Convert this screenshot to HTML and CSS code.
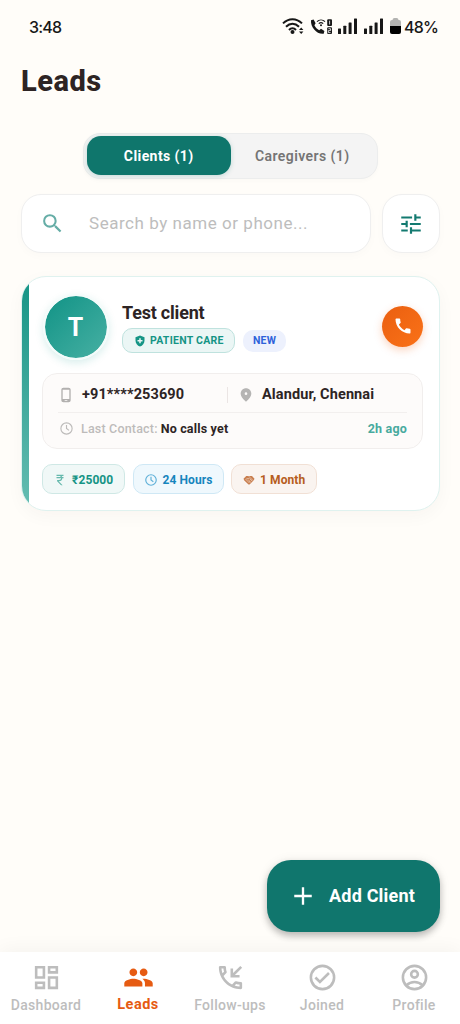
FILE: index.html
```html
<!DOCTYPE html>
<html lang="en">
<head>
<meta charset="utf-8">
<meta name="viewport" content="width=device-width, initial-scale=1">
<title>Leads</title>
<link rel="stylesheet" href="styles.css">
</head>
<body>
<div class="screen">
  <header class="status">
    <span class="time">3:48</span>
    <div class="indicators">
      <svg class="wifi" width="23" height="17" viewBox="0 0 23 17" fill="none" stroke="#171717" stroke-width="2"><path d="M1 5.400C6.500-.2 14.500-.2 20 5.400M4 8.800c4-4 9-4 13 0M7 12c2.200-2.300 4.800-2.300 7 0"/><circle cx="10.500" cy="14" r="2" fill="#171717" stroke="none"/><path d="M17 12l2.200-2.600L21.400 12zM17 13.500l2.200 2.600 2.200-2.600z" fill="#171717" stroke="none"/></svg>
      <svg class="wificall" width="23" height="17" viewBox="0 0 23 17"><path d="M1 2.200 3.600 1.500 5.600 5.200 4.400 7.200c1 2 2.800 4 4.800 5l1.800-1.400 3.400 2.100-.7 2.800C7 16.600.4 9.500 1 2.200z" fill="#171717"/><path d="M7 3.700c2.300-2.300 5.700-2.300 8 0M8.800 5.700c1.300-1.300 3.100-1.300 4.400 0" fill="none" stroke="#171717" stroke-width="1.200"/><circle cx="11" cy="7.300" r="1" fill="#171717"/><rect x="17.200" y="1.200" width="4.800" height="6.800" rx="1" fill="#171717"/><rect x="17.200" y="9.200" width="4.800" height="6.800" rx="1" fill="#171717"/><path d="M19.600 2.700v3.800M18.400 10.700h2.200v1.900h-2.200v2h2.200" fill="none" stroke="#fff" stroke-width=".8"/></svg>
      <svg class="signal" width="20" height="17" viewBox="0 0 20 17" fill="#171717"><rect x="0" y="10.500" width="3" height="5.500" rx=".5"/><rect x="5.300" y="7.800" width="3" height="8.200" rx=".5"/><rect x="10.600" y="4.500" width="3" height="11.500" rx=".5"/><rect x="16" y=".5" width="3" height="15.500" rx=".5"/></svg>
      <svg class="signal second" width="20" height="17" viewBox="0 0 20 17" fill="#171717"><rect x="0" y="10.500" width="3" height="5.500" rx=".5"/><rect x="5.300" y="7.800" width="3" height="8.200" rx=".5"/><rect x="10.600" y="4.500" width="3" height="11.500" rx=".5"/><rect x="16" y=".5" width="3" height="15.500" rx=".5"/></svg>
      <svg class="battery" width="11" height="17" viewBox="0 0 11 17"><path d="M0 8V4q0-2 2-2h.5q0-2 2-2h2q2 0 2 2H9q2 0 2 2v4z" fill="#b3b3b1"/><path d="M0 8h11v6q0 2-2 2H2q-2 0-2-2z" fill="#000"/></svg>
      <span class="percent">48%</span>
    </div>
  </header>

  <h1 class="title">Leads</h1>

  <div class="tabs">
    <button class="tab active"><span>Clients (1)</span></button>
    <button class="tab"><span>Caregivers (1)</span></button>
  </div>

  <div class="search-row">
    <div class="search">
      <svg width="25" height="25" viewBox="0 0 24 24" fill="#65ada6"><path d="M15.500 14h-.79l-.28-.27A6.470 6.470 0 0 0 16 9.500 6.500 6.500 0 1 0 9.500 16c1.610 0 3.090-.59 4.230-1.570l.27.28v.79l5 4.990L20.490 19l-4.990-5zm-6 0C7.010 14 5 11.990 5 9.500S7.010 5 9.500 5 14 7.010 14 9.500 11.990 14 9.500 14z"/></svg>
      <span class="placeholder">Search by name or phone...</span>
    </div>
    <button class="filter"><svg width="26" height="26" viewBox="0 0 24 24" fill="#137a70"><path d="M3 17v2h6v-2H3zM3 5v2h10V5H3zm10 16v-2h8v-2h-8v-2h-2v6h2zM7 9v2H3v2h4v2h2V9H7zm14 4v-2H11v2h10zm-6-4h2V7h4V5h-4V3h-2v6z"/></svg></button>
  </div>

  <article class="card">
    <div class="stripe"></div>
    <div class="body">
      <div class="head">
        <div class="avatar">T</div>
        <div class="identity">
          <h2 class="name">Test client</h2>
          <div class="tags">
            <span class="tag care"><svg width="12" height="12" viewBox="0 0 24 24" fill="#159485"><path fill-rule="evenodd" d="M12 1 3 4.500v6.500c0 5.550 3.840 10.740 9 12 5.160-1.260 9-6.450 9-12V4.500zM10.500 6.500h3v3.500H17v3h-3.500v3.500h-3V13H7v-3h3.500z"/></svg><b>PATIENT CARE</b></span>
            <span class="tag new"><b>NEW</b></span>
          </div>
        </div>
        <button class="call"><svg width="20" height="20" viewBox="0 0 24 24" fill="#fff"><path d="M20.010 15.380c-1.230 0-2.420-.2-3.530-.56a.977.977 0 0 0-1.010.24l-1.570 1.970c-2.830-1.350-5.480-3.900-6.890-6.830l1.950-1.660c.27-.28.35-.67.24-1.020-.37-1.110-.56-2.300-.56-3.530 0-.54-.45-.99-.99-.99H4.190C3.650 3 3 3.240 3 3.990 3 13.280 10.730 21 20.010 21c.71 0 .99-.63.99-1.180v-3.450c0-.54-.45-.99-.99-.99z"/></svg></button>
      </div>

      <div class="info">
        <div class="contact">
          <div class="phone"><svg width="16" height="16" viewBox="0 0 24 24" fill="#b2b0af"><path d="M16 1H8C6.340 1 5 2.340 5 4v16c0 1.660 1.340 3 3 3h8c1.660 0 3-1.340 3-3V4c0-1.660-1.340-3-3-3zm1 17H7V4h10v14zm-3 3h-4v-1h4v1z"/></svg><b>+91****253690</b></div>
          <div class="place"><svg width="16" height="16" viewBox="0 0 24 24" fill="#b5b4b3"><path d="M12 2C7.800 2 4 5.220 4 10.200c0 3.320 2.670 7.250 8 11.800 5.330-4.550 8-8.480 8-11.800C20 5.220 16.200 2 12 2zm0 10a2 2 0 1 1 0-4 2 2 0 0 1 0 4z"/></svg><b>Alandur, Chennai</b></div>
        </div>
        <div class="last">
          <svg width="15" height="15" viewBox="0 0 24 24" fill="none" stroke="#bdbbba" stroke-width="1.800"><circle cx="12" cy="12" r="9"/><path d="M12 6.500V12l4 3"/></svg>
          <span class="label">Last Contact:</span><b class="value">No calls yet</b><b class="ago">2h ago</b>
        </div>
      </div>

      <div class="chips">
        <span class="chip pay"><svg width="14" height="14" viewBox="0 0 24 24" fill="#66b9ad"><path d="M13.660 7c-.56-1.180-1.760-2-3.160-2H6V3h12v2h-3.260c.48.580.84 1.260 1.050 2H18v2h-2.020A5.500 5.500 0 0 1 10.500 14h-.73l6.730 7h-2.770L7 14v-2h3.500c1.760 0 3.220-1.300 3.460-3H6V7z"/></svg><b>₹25000</b></span>
        <span class="chip hours"><svg width="14" height="14" viewBox="0 0 24 24" fill="none" stroke="#5fb0d8" stroke-width="2"><circle cx="12" cy="12" r="9"/><path d="M12 6.500V12l4 3"/></svg><b>24 Hours</b></span>
        <span class="chip month"><svg width="12" height="12" viewBox="0 0 24 24"><path d="M1 9.500 6.500 4h4L12 5l2-1h4l5 5.500-1.500 3L13 21h-2L2.500 13z" fill="#c97f50"/><path d="m5 12 4-4 2 2 3-3 6 6M7 14l3-3M9 16l3-3M11 18l3-3M14 10l4 4M12 13l3 4" fill="none" stroke="#fbf2ec" stroke-width="1"/></svg><b>1 Month</b></span>
      </div>
    </div>
  </article>
</div>

<button class="fab"><svg width="28" height="28" viewBox="0 0 24 24" fill="none" stroke="#fff" stroke-width="2"><path d="M12 4.500v15M4.500 12h15"/></svg><span>Add Client</span></button>

<nav class="nav">
  <a class="item"><svg width="31" height="31" viewBox="0 0 24 24" fill="#bdbdbd"><path d="M19 5v2h-4V5h4M9 5v6H5V5h4m10 8v6h-4v-6h4M9 17v2H5v-2h4M21 3h-8v6h8V3zM11 3H3v10h8V3zm10 8h-8v10h8V11zm-10 4H3v6h8v-6z"/></svg><span>Dashboard</span></a>
  <a class="item current"><svg width="31" height="31" viewBox="0 0 24 24" fill="#e65b12"><path d="M16 11c1.660 0 2.990-1.340 2.990-3S17.660 5 16 5s-3 1.340-3 3 1.340 3 3 3zm-8 0c1.660 0 2.990-1.340 2.990-3S9.660 5 8 5 5 6.340 5 8s1.340 3 3 3zm0 2c-2.330 0-7 1.170-7 3.500V19h14v-2.500c0-2.330-4.670-3.500-7-3.500zm8 0c-.29 0-.62.02-.97.05 1.160.84 1.970 1.970 1.970 3.450V19h6v-2.500c0-2.330-4.670-3.500-7-3.500z"/></svg><span>Leads</span></a>
  <a class="item"><svg width="31" height="31" viewBox="0 0 24 24" fill="#bdbdbd"><path d="M20 15.500c-1.250 0-2.450-.2-3.570-.57a1.020 1.020 0 0 0-1.020.24l-2.200 2.200a15.045 15.045 0 0 1-6.590-6.590l2.200-2.200c.28-.28.36-.67.25-1.020A11.360 11.360 0 0 1 8.500 4c0-.55-.45-1-1-1H4c-.55 0-1 .45-1 1 0 9.390 7.610 17 17 17 .55 0 1-.45 1-1v-3.500c0-.55-.45-1-1-1zM5.030 5h1.500c.07.880.22 1.750.46 2.590L5.790 8.800c-.41-1.210-.67-2.480-.76-3.800zM19 18.970c-1.320-.09-2.600-.35-3.800-.76l1.200-1.200c.85.240 1.710.390 2.600.450v1.510zM21 4.410 19.590 3 14 8.590V5h-2v7h7v-2h-3.590z"/></svg><span>Follow-ups</span></a>
  <a class="item"><svg width="31" height="31" viewBox="0 0 24 24" fill="none" stroke="#bdbdbd" stroke-width="2"><circle cx="12" cy="12" r="9"/><path d="m6.500 12 3.500 3.500 7-7"/></svg><span>Joined</span></a>
  <a class="item"><svg width="31" height="31" viewBox="0 0 24 24" fill="none" stroke="#bdbdbd" stroke-width="2"><circle cx="12" cy="12" r="9"/><circle cx="12" cy="9.500" r="2.600"/><path d="M5.800 18c3.400-3.300 9-3.300 12.400 0"/></svg><span>Profile</span></a>
</nav>
</body>
</html>
```

FILE: styles.css
```css
* { box-sizing: border-box; }
html, body { margin: 0; height: 100%; }
body {
  display: flex;
  flex-direction: column;
  width: 460px;
  height: 1024px;
  overflow: hidden;
  position: relative;
  background: #fffdf9;
  color: #2d2424;
  font-family: Roboto, "Noto Sans", sans-serif;
}
button { border: 0; padding: 0; font: inherit; }
svg { display: block; flex: none; }
b { font-weight: 700; }

.screen { flex: 1; padding: 0 20px 0 21px; }

.status {
  display: flex;
  justify-content: space-between;
  align-items: center;
  height: 53px;
  padding: 0 2px 0 8px;
  color: #171717;
}
.time { font: 500 16px/20px Inter, sans-serif; letter-spacing: -.8px; }
.indicators { display: flex; align-items: center; }
.wifi { margin-right: 5px; }
.wificall { margin-right: 5px; }
.signal { margin-right: 6px; }
.battery { margin-right: 3px; }
.percent { font: 500 16px/20px Inter, sans-serif; letter-spacing: -.8px; }

.title { margin: 9px 0 0; font-size: 29px; line-height: 38px; font-weight: 800; letter-spacing: .5px; }

.tabs {
  display: flex;
  width: 295px;
  height: 46px;
  margin: 33px 0 0 62px;
  padding: 2px 3px;
  border: 1px solid #eceded;
  border-radius: 17px;
  background: #f4f4f4;
  box-shadow: 0 2px 5px rgba(0, 0, 0, .02);
}
.tab {
  flex: 1;
  height: 39px;
  border-radius: 14px;
  background: none;
  color: #757575;
  font-size: 14px;
  font-weight: 600;
  letter-spacing: .42px;
}
.tab.active { background: #0f766c; color: #fff; font-weight: 700; box-shadow: 0 1px 5px rgba(15, 118, 110, .22); }

.search-row { display: flex; gap: 11px; margin-top: 15px; }
.search, .filter {
  height: 59px;
  border: 1.500px solid #efefef;
  border-radius: 20px;
  background: #fff;
  box-shadow: 0 3px 10px rgba(0, 0, 0, .018);
}
.search { flex: 1; display: flex; align-items: center; padding: 0 0 0 18px; }
.placeholder { margin: -2px 0 0 24px; color: #bdbdbd; font-size: 17px; letter-spacing: .54px; }
.filter { width: 58px; display: flex; align-items: center; justify-content: center; }

.card {
  display: flex;
  height: 235px;
  margin-top: 23px;
  border: 1.500px solid #dff2ef;
  border-radius: 25px;
  overflow: hidden;
  background: #fff;
  box-shadow: 0 5px 18px rgba(45, 36, 36, .035);
}
.stripe { width: 6.500px; background: linear-gradient(#159485, #66bdb2); }
.body { flex: 1; padding: 16px 15px 0 14.500px; }

.head { display: flex; align-items: flex-start; height: 80px; }
.avatar {
  width: 66px;
  height: 66px;
  border: 2px solid #f3fbfa;
  border-radius: 50%;
  background: linear-gradient(135deg, #119386, #47b0a3) padding-box;
  box-shadow: 0 3px 8px rgba(13, 148, 136, .16);
  color: #fff;
  font-size: 25px;
  font-weight: 700;
  line-height: 64px;
  text-align: center;
  margin: .5px 0 0 -.5px;
}
.identity { flex: 1; margin-left: 13.500px; padding-top: 7px; }
.name { margin: 0; font-size: 18px; line-height: 25px; font-weight: 700; letter-spacing: -.2px; }
.tags { display: flex; align-items: center; gap: 8px; margin-top: 3px; }
.tag { display: flex; align-items: center; font-size: 10.500px; line-height: 14px; }
.care {
  height: 25px;
  width: 113px;
  padding-left: 11px;
  gap: 4px;
  border: 1px solid #bfe2de;
  border-radius: 10px;
  background: #ebf6f5;
  color: #159485;
  letter-spacing: .26px;
}
.new { height: 22px; width: 43px; justify-content: center; border-radius: 10px; background: #edf1fd; color: #2e62da; letter-spacing: .2px; }
.call {
  display: flex;
  align-items: center;
  justify-content: center;
  width: 41px;
  height: 41px;
  margin: 12.500px 1px 0 0;
  border-radius: 50%;
  background: linear-gradient(135deg, #ea5f10, #fa7218);
  box-shadow: 0 3px 9px rgba(234, 88, 12, .26);
}

.info { width: 381px; height: 76px; margin-left: -1px; padding: 0 15px; border: 1px solid #f1eeed; border-radius: 15px; background: #fdfbfa; }
.contact { display: flex; align-items: center; height: 39px; border-bottom: 1px solid #f2efee; padding-top: 3px; font-size: 14.500px; letter-spacing: .11px; }
.phone, .place { display: flex; align-items: center; }
.phone { width: 170px; height: 16px; gap: 8px; border-right: 1px solid #ebe5e4; }
.place { margin-left: 10px; gap: 8px; }
.last { display: flex; align-items: center; height: 31px; padding-left: 1px; font-size: 12.500px; }
.label { margin-left: 7px; color: #bdbbba; font-weight: 500; letter-spacing: .18px; }
.value { margin-left: 3px; letter-spacing: .18px; }
.ago { margin-left: auto; color: #48aa9e; letter-spacing: .2px; }

.chips { display: flex; gap: 7.500px; margin: 15px 0 0 -1px; }
.chip { display: flex; align-items: center; height: 30px; padding: 1px 0 0 10px; gap: 5px; border: 1.500px solid; border-radius: 10px; font-size: 12px; letter-spacing: .1px; }
.pay { width: 83px; border-color: #cfe8e5; background: #f0f8f7; color: #159485; }
.hours { width: 91px; border-color: #cfe8f5; background: #eff8fd; color: #1685bd; }
.month { width: 86px; padding-left: 11px; border-color: #f1e0d5; background: #faf4f0; color: #b65d20; }

.fab {
  position: absolute;
  left: 267px;
  top: 860px;
  width: 173px;
  height: 72px;
  display: flex;
  align-items: center;
  padding-left: 22px;
  gap: 12px;
  border-radius: 24px;
  background: #10766d;
  color: #fff;
  font-size: 18px;
  font-weight: 700;
  letter-spacing: .2px;
  box-shadow: 0 4px 7px rgba(0, 0, 0, .24), 0 1px 12px rgba(0, 0, 0, .08);
}
.fab span { margin-top: -1px; }

.nav { display: flex; height: 72px; background: #fff; box-shadow: 0 -3px 18px rgba(0, 0, 0, .045); }
.item { flex: 1; display: flex; flex-direction: column; align-items: center; padding-top: 10px; color: #bdbdbd; font-size: 14px; font-weight: 500; line-height: 18px; letter-spacing: .3px; white-space: nowrap; }
.item span { margin-top: 3px; }
.item.current { color: #e65b12; font-weight: 700; font-size: 14.500px; letter-spacing: .5px; }
.item.current span { margin-top: 3px; }
```
